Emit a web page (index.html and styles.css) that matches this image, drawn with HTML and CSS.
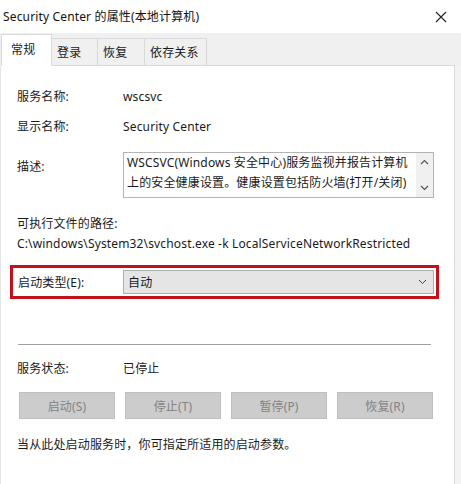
FILE: index.html
```html
<!DOCTYPE html>
<html lang="zh-CN">
<head>
<meta charset="utf-8">
<link rel="stylesheet" href="styles.css">
</head>
<body>
<div class="window">
  <div class="titlebar">
    <span class="title">Security Center 的属性(本地计算机)</span>
    <svg class="close" width="12" height="12" viewBox="0 0 12 12"><path d="M1 1L11 11M11 1L1 11" stroke="#222" stroke-width="1.1" fill="none"/></svg>
  </div>
  <div class="tabstrip">
    <div class="tab active">常规</div>
    <div class="tab t2">登录</div>
    <div class="tab t3">恢复</div>
    <div class="tab t4">依存关系</div>
    <div class="tabfill"></div>
  </div>
  <div class="panel">
    <div class="row r1"><span class="label">服务名称:</span><span class="value">wscsvc</span></div>
    <div class="row r2"><span class="label">显示名称:</span><span class="value">Security Center</span></div>
    <div class="row r3">
      <span class="label desc-label">描述:</span>
      <div class="textbox">
        <div class="tb-text">WSCSVC(Windows 安全中心)服务监视并报告计算机上的安全健康设置。健康设置包括防火墙(打开/关闭)</div>
        <div class="scrollbar">
          <svg width="9" height="6" viewBox="0 0 9 6"><path d="M1 5L4.5 1.5L8 5" stroke="#555" stroke-width="1.2" fill="none"/></svg>
          <svg width="9" height="6" viewBox="0 0 9 6"><path d="M1 1L4.5 4.5L8 1" stroke="#555" stroke-width="1.2" fill="none"/></svg>
        </div>
      </div>
    </div>
    <div class="pathlabel">可执行文件的路径:</div>
    <div class="path">C:\windows\System32\svchost.exe -k LocalServiceNetworkRestricted</div>
    <div class="highlight">
      <span class="label">启动类型(E):</span>
      <div class="combo">
        <span>自动</span>
        <svg width="9" height="6" viewBox="0 0 9 6"><path d="M1 1L4.5 4.5L8 1" stroke="#444" stroke-width="1" fill="none"/></svg>
      </div>
    </div>
    <div class="separator"></div>
    <div class="row r4"><span class="label">服务状态:</span><span class="value">已停止</span></div>
    <div class="buttons">
      <div class="btn">启动(S)</div>
      <div class="btn">停止(T)</div>
      <div class="btn">暂停(P)</div>
      <div class="btn">恢复(R)</div>
    </div>
    <div class="note">当从此处启动服务时，你可指定所适用的启动参数。</div>
  </div>
</div>
</body>
</html>
```
FILE: styles.css
```css
* { box-sizing: border-box; }
html, body { margin: 0; padding: 0; }
body {
  width: 461px;
  height: 484px;
  overflow: hidden;
  background: #f3f3f3;
  font-family: "Noto Sans", "Noto Sans CJK SC", sans-serif;
  font-size: 12px;
  letter-spacing: 0.15px;
  color: #1a1a1a;
}
.window { width: 461px; height: 484px; display: flex; flex-direction: column; }
.titlebar {
  height: 33px;
  background: #fff;
  display: flex;
  align-items: center;
  justify-content: space-between;
  padding: 0 14px 0 3px;
  flex: none;
}
.title { font-size: 12px; line-height: 16px; color: #111; }
.tabstrip {
  height: 33px;
  background: #f0f0f0;
  display: flex;
  align-items: flex-end;
  padding-left: 1px;
  flex: none;
}
.tab {
  height: 28px;
  line-height: 28px;
  padding-left: 5px;
  white-space: nowrap;
  border: 1px solid #d9d9d9;
  border-left: none;
  background: #f0f0f0;
  color: #1a1a1a;
  flex: none;
}
.tab.active {
  width: 51px;
  height: 32px;
  line-height: 30px;
  padding-left: 9px;
  background: #fff;
  border-left: 1px solid #d9d9d9;
  border-bottom: 1px solid #fff;
}
.t2 { width: 46px; }
.t3 { width: 47px; }
.t4 { width: 62px; }
.tabfill {
  flex: 1;
  height: 1px;
  background: #d9d9d9;
  margin-right: 6px;
}
.panel {
  flex: 1;
  width: 455px;
  background: #fff;
  border-left: 1px solid #e3e3e3;
  border-right: 1px solid #d9d9d9;
  padding: 21px 0 0 16px;
}
.row { display: flex; line-height: 20px; }
.label { width: 106px; flex: none; }
.r2 { margin-top: 10px; }
.r3 { margin-top: 15px; }
.desc-label { padding-top: 5px; }
.textbox {
  width: 311px;
  height: 46px;
  border: 1px solid #b3b3b3;
  display: flex;
  background: #fff;
}
.tb-text {
  flex: 1;
  padding: 0 6px 0 3px;
  line-height: 20px;
  overflow: hidden;
}
.scrollbar {
  width: 17px;
  flex: none;
  background: #f0f0f0;
  display: flex;
  flex-direction: column;
  justify-content: space-between;
  align-items: center;
  padding: 6px 0 6px;
}
.pathlabel { margin-top: 16px; line-height: 20px; }
.path { line-height: 19px; white-space: nowrap; }
.highlight {
  margin-top: 12px;
  margin-left: -7px;
  width: 429px;
  height: 34px;
  border: 3px solid #c1121c;
  display: flex;
  align-items: center;
  padding-left: 5px;
}
.highlight .label { width: 105px; }
.combo {
  width: 311px;
  height: 24px;
  background: #e5e5e5;
  border: 1px solid #adadad;
  display: flex;
  align-items: center;
  justify-content: space-between;
  padding: 0 6px 0 4px;
}
.separator {
  margin-top: 45px;
  width: 413px;
  margin-left: 1px;
  height: 1px;
  background: #a0a0a0;
}
.r4 { margin-top: 14px; }
.buttons {
  margin-top: 13px;
  margin-left: 2px;
  width: 414px;
  display: flex;
  justify-content: space-between;
}
.btn {
  width: 96px;
  height: 27px;
  background: #cccccc;
  border: 1px solid #bfbfbf;
  color: #838383;
  display: flex;
  align-items: center;
  justify-content: center;
}
.note { margin-top: 16px; line-height: 20px; }
```
